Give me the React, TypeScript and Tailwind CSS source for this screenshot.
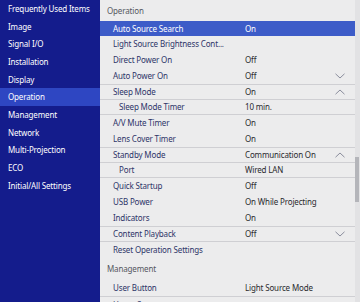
import React from 'react';

type Row = {
  label: string;
  value?: string;
  h: string;
  indent?: boolean;
  chevron?: 'up' | 'down';
  active?: boolean;
  lineTop?: boolean;
  lineBottom?: boolean;
};

const menu = [
  'Frequently Used Items',
  'Image',
  'Signal I/O',
  'Installation',
  'Display',
  'Operation',
  'Management',
  'Network',
  'Multi-Projection',
  'ECO',
  'Initial/All Settings',
];

const rows: Row[] = [
  { label: 'Auto Source Search', value: 'On', h: 'h-[15px]', active: true },
  { label: 'Light Source Brightness Cont...', h: 'h-[16px]' },
  { label: 'Direct Power On', value: 'Off', h: 'h-[16px]' },
  { label: 'Auto Power On', value: 'Off', h: 'h-[16px]', chevron: 'down' },
  { label: 'Sleep Mode', value: 'On', h: 'h-[16px]', chevron: 'up', lineTop: true, lineBottom: true },
  { label: 'Sleep Mode Timer', value: '10 min.', h: 'h-[15px]', indent: true, lineBottom: true },
  { label: 'A/V Mute Timer', value: 'On', h: 'h-[16px]' },
  { label: 'Lens Cover Timer', value: 'On', h: 'h-[16px]' },
  { label: 'Standby Mode', value: 'Communication On', h: 'h-[16px]', chevron: 'up', lineTop: true, lineBottom: true },
  { label: 'Port', value: 'Wired LAN', h: 'h-[15px]', indent: true, lineBottom: true },
  { label: 'Quick Startup', value: 'Off', h: 'h-[16px]' },
  { label: 'USB Power', value: 'On While Projecting', h: 'h-[16px]' },
  { label: 'Indicators', value: 'On', h: 'h-[16px]' },
  { label: 'Content Playback', value: 'Off', h: 'h-[16px]', chevron: 'down', lineTop: true, lineBottom: true },
  { label: 'Reset Operation Settings', h: 'h-[16px]' },
];

const Chevron = ({ dir }: { dir: 'up' | 'down' }) => (
  <svg width="10" height="6" viewBox="0 0 10 6" className="shrink-0">
    <polyline
      points={dir === 'down' ? '0.5,0.8 5,5 9.5,0.8' : '0.5,5.2 5,1 9.5,5.2'}
      fill="none"
      stroke="#8a8d9c"
      strokeWidth="1"
    />
  </svg>
);

const SettingRow = ({ row }: { row: Row }) => (
  <div
    className={`${row.h} shrink-0 flex items-center box-border ${row.active ? 'bg-[#3d5cc8] text-white' : 'text-[#2c3468]'} ${
      row.lineTop ? 'border-t border-[#cfcfd3]' : ''
    } ${row.lineBottom ? 'border-b border-[#cfcfd3]' : ''}`}
  >
    <div className={`w-[145px] shrink-0 whitespace-nowrap ${row.indent ? 'pl-[19px]' : 'pl-[13px]'}`}>{row.label}</div>
    <div className={`flex-1 whitespace-nowrap ${row.active ? 'text-white' : 'text-[#2a2a2e]'}`}>{row.value}</div>
    {row.chevron && (
      <div className="w-[20px] flex justify-start">
        <Chevron dir={row.chevron} />
      </div>
    )}
  </div>
);

export default function App() {
  return (
    <div
      className="w-[360px] h-[302px] overflow-hidden flex text-[8px] tracking-[-0.15px] leading-none"
      style={{ fontFamily: '"Noto Sans", "Open Sans", sans-serif' }}
    >
      <div className="w-[100px] shrink-0 bg-[#141c8c] text-white">
        {menu.map((m) => (
          <div
            key={m}
            className={`h-[17.7px] flex items-center pl-[8px] whitespace-nowrap ${m === 'Operation' ? 'bg-[#2e46c2]' : ''}`}
          >
            {m}
          </div>
        ))}
      </div>

      <div className="flex-1 flex bg-[#ececed]">
        <div className="flex-1 flex flex-col overflow-hidden">
          <div className="h-[21px] shrink-0 flex items-center pl-[7px] text-[#55575f]">Operation</div>
          {rows.map((r) => (
            <SettingRow key={r.label} row={r} />
          ))}
          <div className="h-[21px] shrink-0 flex items-center pl-[7px] text-[#55575f]">Management</div>
          <div className="h-[18px] shrink-0 flex items-center border-b border-[#cfcfd3] text-[#2c3468]">
            <div className="w-[145px] shrink-0 pl-[13px]">User Button</div>
            <div className="flex-1 text-[#2a2a2e]">Light Source Mode</div>
          </div>
          <div className="h-[16px] shrink-0 flex items-center text-[#2c3468]">
            <div className="w-[145px] shrink-0 pl-[13px]">Home Screen</div>
          </div>
        </div>
        <div className="w-[5px] shrink-0 bg-[#e2e2e4] flex flex-col">
          <div className="h-[157px] shrink-0" />
          <div className="h-[45px] w-[4px] shrink-0 bg-[#b4b5ba]" />
        </div>
      </div>
    </div>
  );
}
